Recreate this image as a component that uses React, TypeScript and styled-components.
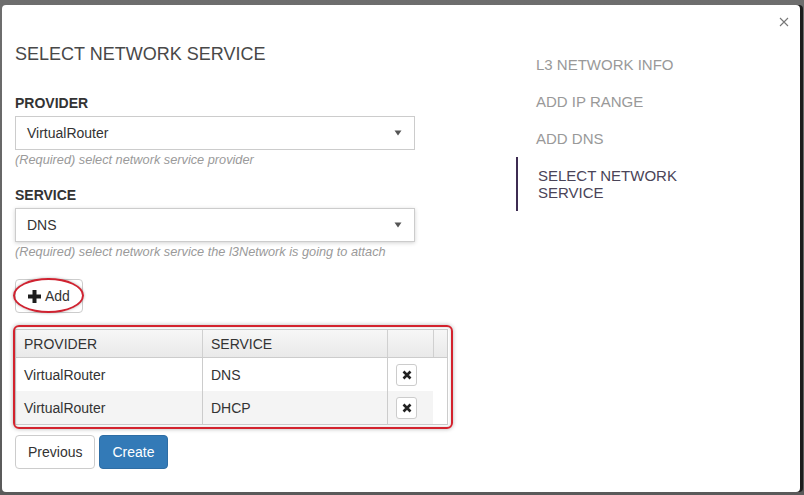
import React from 'react';
import styled, { createGlobalStyle } from 'styled-components';

const Global = createGlobalStyle`
  html, body { margin: 0; padding: 0; background: #5b5b5b; }
  body { font-family: "Liberation Sans", Arial, sans-serif; }
  * { box-sizing: border-box; }
`;

const Backdrop = styled.div`
  width: 804px;
  height: 495px;
  padding: 5px 4px 3px 2px;
  background: linear-gradient(#6e6e6e, #5a5a5a);
`;

const Modal = styled.div`
  width: 798px;
  height: 487px;
  background: #fff;
  border-radius: 4px;
  display: flex;
  box-shadow: 3px 0 0 #1c1c1c;
`;

const FormColumn = styled.div`
  width: 446px;
  padding: 39px 0 0 13px;
  display: flex;
  flex-direction: column;
  align-items: flex-start;
`;

const Title = styled.h3`
  margin: 0;
  font-size: 18px;
  line-height: 20px;
  font-weight: normal;
  color: #484848;
`;

const FieldLabel = styled.label<{ $gap: number }>`
  display: block;
  margin-top: ${(p) => p.$gap}px;
  font-size: 14px;
  line-height: 20px;
  font-weight: bold;
  color: #333;
`;

const SelectBox = styled.div<{ $focused?: boolean }>`
  margin-top: 3px;
  width: 400px;
  height: 34px;
  border: 1px solid #ccc;
  background: #fff;
  display: flex;
  align-items: center;
  justify-content: space-between;
  padding: 0 12px 0 11px;
  font-size: 14px;
  color: #333;
  box-shadow: ${(p) => (p.$focused ? '0 1px 4px rgba(0,0,0,0.18)' : 'none')};
`;

const Help = styled.div`
  margin-top: 2px;
  font-size: 12.75px;
  line-height: 16px;
  font-style: italic;
  color: #9a9a9a;
`;

const Marked = styled.div<{ $gap: number }>`
  position: relative;
  margin-top: ${(p) => p.$gap}px;
`;

const Ellipse = styled.span`
  position: absolute;
  left: -2px;
  right: -1px;
  top: -1px;
  bottom: 0;
  border: 2px solid #cf2230;
  border-radius: 50%;
  box-shadow: 0 0 3px rgba(0, 0, 0, 0.3);
  pointer-events: none;
`;

const RedBox = styled.span`
  position: absolute;
  left: -2px;
  right: -5px;
  top: -4px;
  bottom: -4px;
  border: 2px solid #d3222d;
  border-radius: 6px;
  box-shadow: 0 0 4px rgba(0, 0, 0, 0.3), inset 0 0 3px rgba(0, 0, 0, 0.2);
  pointer-events: none;
`;

const Button = styled.button<{ $primary?: boolean }>`
  height: 34px;
  padding: 0 12px;
  border-radius: 4px;
  border: 1px solid ${(p) => (p.$primary ? '#2e6da4' : '#ccc')};
  background: ${(p) => (p.$primary ? '#337ab7' : '#fff')};
  color: ${(p) => (p.$primary ? '#fff' : '#333')};
  font-family: "Liberation Sans", Arial, sans-serif;
  font-size: 14px;
  display: inline-flex;
  align-items: center;
  gap: 4px;
  cursor: pointer;
`;

const Grid = styled.div`
  width: 433px;
  border: 1px solid #ccc;
  background: #fff;
  font-size: 14px;
  color: #333;
`;

const HeadRow = styled.div`
  display: grid;
  grid-template-columns: 187px 185px 46px 1fr;
  height: 28px;
  border-bottom: 1px solid #ccc;
  background: linear-gradient(#f7f7f7, #e9e9e9);
`;

const HeadCell = styled.div`
  border-right: 1px solid #d0d0d0;
  padding-left: 8px;
  display: flex;
  align-items: center;
  &:last-child { border-right: none; }
`;

const BodyRow = styled.div<{ $alt?: boolean }>`
  width: 417px;
  display: grid;
  grid-template-columns: 187px 185px 45px;
  height: 33px;
  background: ${(p) => (p.$alt ? '#f4f4f4' : '#fff')};
`;

const Cell = styled.div<{ $last?: boolean }>`
  border-right: ${(p) => (p.$last ? 'none' : '1px solid #ccc')};
  padding-left: 8px;
  display: flex;
  align-items: center;
`;

const RemoveBtn = styled.button`
  width: 21px;
  height: 22px;
  padding: 0;
  border: 1px solid #ccc;
  border-radius: 3px;
  background: #fff;
  display: flex;
  align-items: center;
  justify-content: center;
`;

const Actions = styled.div`
  margin-top: 10px;
  display: flex;
  gap: 4px;
`;

const Side = styled.div`
  flex: 1;
  display: flex;
  flex-direction: column;
  padding: 7px 11px 0 68px;
`;

const CloseRow = styled.div`
  height: 20px;
  display: flex;
  justify-content: flex-end;
  align-items: center;
`;

const Nav = styled.ul`
  list-style: none;
  margin: 14px 0 0;
  padding: 0;
  width: 180px;
`;

const NavItem = styled.li<{ $active?: boolean }>`
  padding: 10px 0 10px 20px;
  font-size: 15px;
  line-height: 17px;
  color: ${(p) => (p.$active ? '#4a4458' : '#999')};
  border-left: ${(p) => (p.$active ? '2px solid #3d2c52' : 'none')};
`;

const Caret = () => (
  <svg width="8" height="6" viewBox="0 0 8 6">
    <path d="M0.5 0.5 H7.5 L4 5.5 Z" fill="#555" />
  </svg>
);

const PlusIcon = () => (
  <svg width="13" height="13" viewBox="0 0 13 13">
    <rect x="4.5" y="0" width="4" height="13" fill="#1e1e1e" />
    <rect x="0" y="4.5" width="13" height="4" fill="#1e1e1e" />
  </svg>
);

const TimesIcon = () => (
  <svg width="10" height="10" viewBox="0 0 10 10">
    <path d="M1.5 1.5 L8.5 8.5 M8.5 1.5 L1.5 8.5" stroke="#222" strokeWidth="2.6" />
  </svg>
);

const CloseIcon = () => (
  <svg width="10" height="10" viewBox="0 0 10 10">
    <path d="M1 1 L9 9 M9 1 L1 9" stroke="#777" strokeWidth="1.1" />
  </svg>
);

const rows = [
  { provider: 'VirtualRouter', service: 'DNS' },
  { provider: 'VirtualRouter', service: 'DHCP' },
];

export default function App() {
  return (
    <>
      <Global />
      <Backdrop>
        <Modal>
          <FormColumn>
            <Title>SELECT NETWORK SERVICE</Title>

            <FieldLabel $gap={29}>PROVIDER</FieldLabel>
            <SelectBox>
              <span>VirtualRouter</span>
              <Caret />
            </SelectBox>
            <Help>(Required) select network service provider</Help>

            <FieldLabel $gap={17}>SERVICE</FieldLabel>
            <SelectBox $focused>
              <span>DNS</span>
              <Caret />
            </SelectBox>
            <Help>(Required) select network service the l3Network is going to attach</Help>

            <Marked $gap={19}>
              <Button>
                <PlusIcon />
                Add
              </Button>
              <Ellipse />
            </Marked>

            <Marked $gap={16}>
              <Grid>
                <HeadRow>
                  <HeadCell>PROVIDER</HeadCell>
                  <HeadCell>SERVICE</HeadCell>
                  <HeadCell />
                  <HeadCell />
                </HeadRow>
                {rows.map((r, i) => (
                  <BodyRow key={r.service} $alt={i % 2 === 1}>
                    <Cell>{r.provider}</Cell>
                    <Cell>{r.service}</Cell>
                    <Cell $last>
                      <RemoveBtn aria-label="remove">
                        <TimesIcon />
                      </RemoveBtn>
                    </Cell>
                  </BodyRow>
                ))}
              </Grid>
              <RedBox />
            </Marked>

            <Actions>
              <Button>Previous</Button>
              <Button $primary>Create</Button>
            </Actions>
          </FormColumn>

          <Side>
            <CloseRow>
              <CloseIcon />
            </CloseRow>
            <Nav>
              <NavItem>L3 NETWORK INFO</NavItem>
              <NavItem>ADD IP RANGE</NavItem>
              <NavItem>ADD DNS</NavItem>
              <NavItem $active>SELECT NETWORK SERVICE</NavItem>
            </Nav>
          </Side>
        </Modal>
      </Backdrop>
    </>
  );
}
